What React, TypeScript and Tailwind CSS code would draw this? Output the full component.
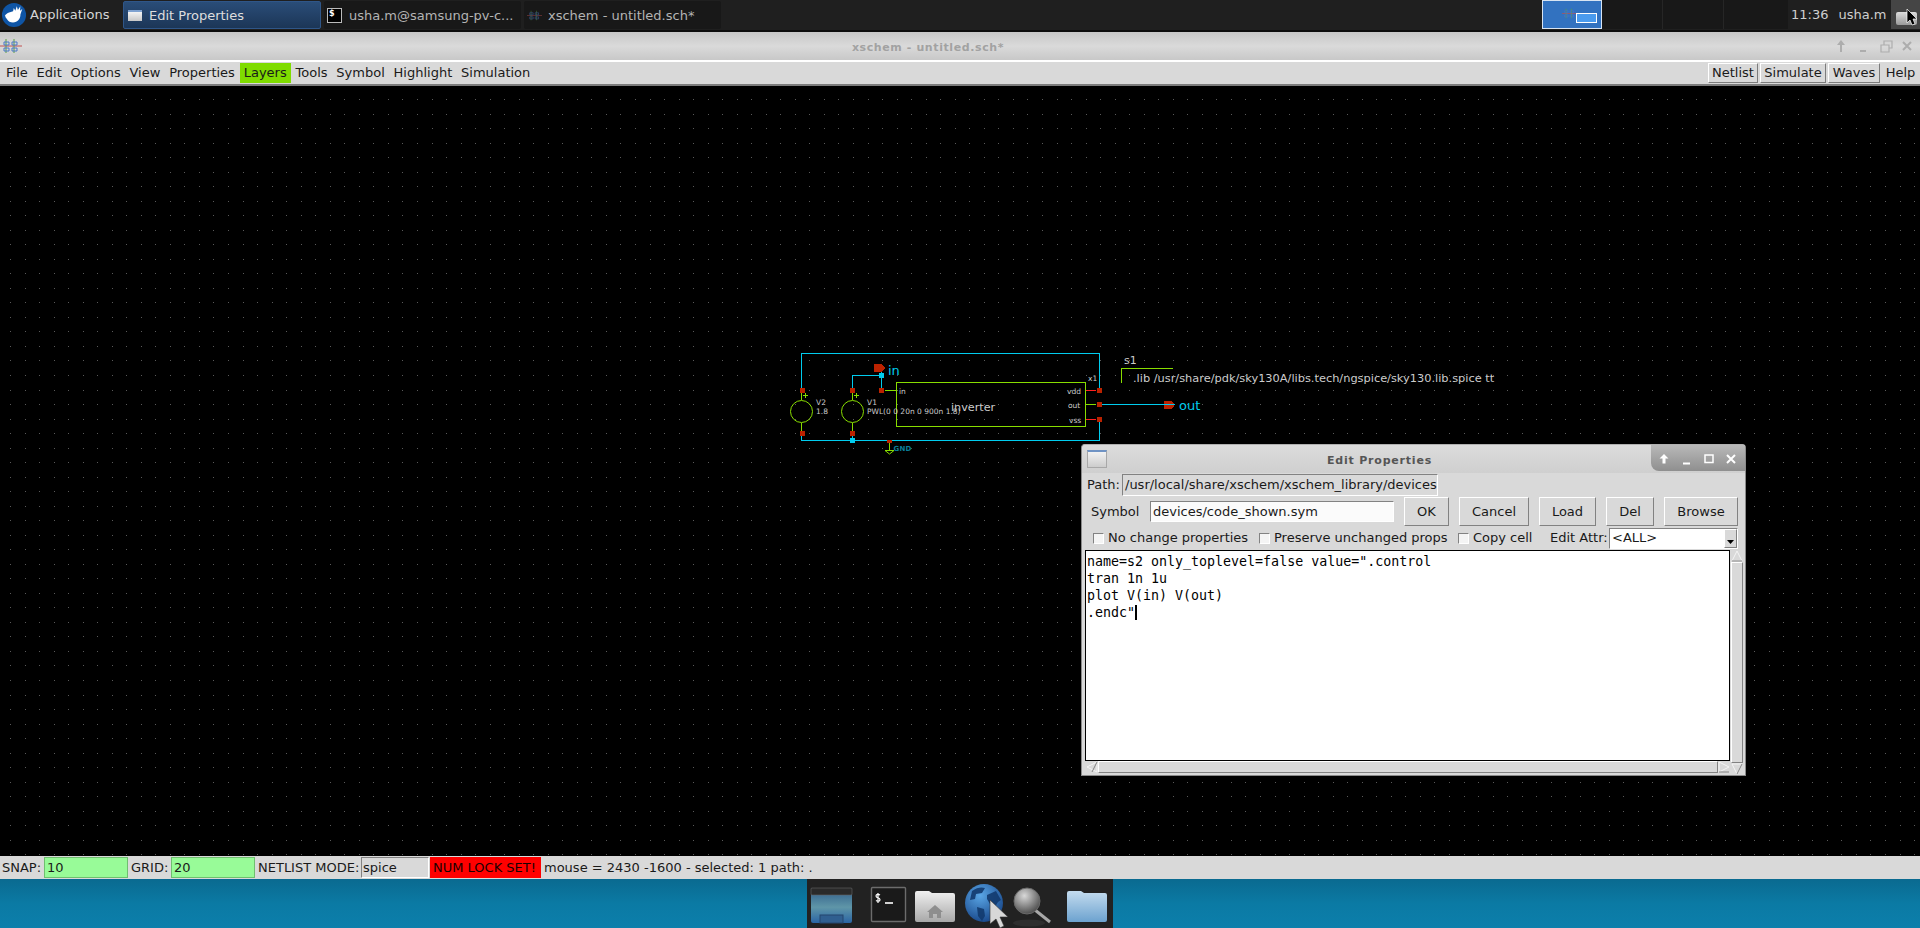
import { useMemo } from "react";

const WIRE = "#00ccee";
const GREEN = "#88dd00";
const PIN = "#bb2200";
const TEXT = "#cccccc";

function SchematicIcon({ className = "" }: { className?: string }) {
  return (
    <svg viewBox="0 0 22 16" className={className}>
      <path d="M0 8h22" stroke="#c05050" strokeWidth="1" />
      <path d="M6 1v14M14 1v14" stroke="#5aa040" strokeWidth="1" />
      <path d="M4 4h5v3H4zM12 4h5v3h-5zM4 10h5v3H4zM12 10h5v3h-5z" fill="none" stroke="#4a78c8" strokeWidth="1" />
    </svg>
  );
}

function Logo() {
  return (
    <svg viewBox="0 0 28 28" className="w-[26px] h-[26px] shrink-0">
      <circle cx="14" cy="14" r="13" fill="#0f55a5" />
      <path
        d="M4 14.5c1.5-1.5 4-3.5 6.5-3.8l2.5-.7.8-3.5 1.6 3 1.6-5 1.2 4.2 2.6-4.2-.3 5 2.4-2-2 6c.2 4.5-3 8.5-8 8.5-3 0-5-1.3-6.2-3.2-1-1.2-2.2-2.6-2.2-4.3z"
        fill="#ffffff"
      />
    </svg>
  );
}

function TaskButton({ active, icon, label }: { active?: boolean; icon: React.ReactNode; label: string }) {
  return (
    <div
      className={
        active
          ? "h-[28px] w-[198px] flex items-center rounded-[2px] border border-[#2f5688] bg-gradient-to-b from-[#2a4d78] to-[#1c3657] text-[#dedede]"
          : "h-[28px] w-[197px] flex items-center rounded-[2px] bg-[#181818] text-[#b4b4b4]"
      }
    >
      {icon}
      <span className="text-[13px] leading-none whitespace-nowrap">{label}</span>
    </div>
  );
}

function TopBar() {
  return (
    <div className="h-[32px] shrink-0 flex items-start bg-[#1f1f1f] border-b-2 border-[#0c0c0c]">
      <div className="w-[123px] h-[29px] flex items-center pl-[1px] gap-[3px] text-[#d6d6d6] text-[13px]">
        <Logo />
        <span>Applications</span>
      </div>
      <div className="flex gap-[3px] pt-[1px]">
        <TaskButton
          active
          label="Edit Properties"
          icon={
            <span className="ml-[4px] mr-[7px] w-[14px] h-[11px] bg-gradient-to-b from-[#f4f4f4] to-[#c8c8c8] border-t-2 border-[#7fa2d0]" />
          }
        />
        <TaskButton
          label="usha.m@samsung-pv-c..."
          icon={
            <span className="ml-[3px] mr-[7px] w-[15px] h-[15px] bg-black border border-[#bbbbbb] text-white text-[8px] leading-[10px] font-bold pl-[1px]">
              $
            </span>
          }
        />
        <TaskButton label="xschem - untitled.sch*" icon={<SchematicIcon className="ml-[3px] mr-[6px] w-[15px] h-[15px] opacity-60" />} />
      </div>
      <div className="ml-[821px] h-[29px] w-[60px] relative bg-[#3272c0] border border-[#d8e4f2]">
        <SchematicIcon className="absolute left-[19px] top-[6px] w-[15px] h-[13px]" />
        <div className="absolute left-[33px] top-[12px] w-[21px] h-[10px] bg-[#4a9bee] border border-white" />
      </div>
      <div className="h-[29px] w-[61px] bg-[#181818] border-r border-[#262626]" />
      <div className="h-[29px] w-[61px] bg-[#181818] border-r border-[#262626]" />
      <div className="h-[29px] w-[64px] bg-[#181818]" />
      <div className="h-[29px] w-[103px] flex items-center text-[13px] text-[#cfcfcf]">
        <span className="ml-[3px]">11:36</span>
        <span className="ml-[10px]">usha.m</span>
      </div>
      <div className="h-[29px] flex-1 relative bg-[#454545]">
        <div className="absolute left-[5px] top-[12px] w-[21px] h-[13px] rounded-[2px] bg-gradient-to-b from-[#dddddd] to-[#9a9a9a]" />
        <svg viewBox="0 0 12 18" className="absolute left-[15px] top-[8px] w-[12px] h-[18px]">
          <path d="M1 1v14l3-3 2 5 3-1-2-5h4z" fill="#000" stroke="#fff" strokeWidth="0.7" />
        </svg>
      </div>
    </div>
  );
}

function TitleBar() {
  return (
    <div className="h-[28px] shrink-0 relative flex items-center justify-center pr-[64px] pt-[4px] bg-gradient-to-b from-[#c6c6c6] via-[#dadada] to-[#c8c8c8]">
      <SchematicIcon className="absolute left-0 top-[6px] w-[22px] h-[16px]" />
      <span className="text-[11px] font-bold text-[#a2a2a2] tracking-[0.6px]">xschem - untitled.sch*</span>
      <svg viewBox="0 0 90 14" className="absolute right-[6px] top-[7px] w-[90px] h-[14px]" fill="none" stroke="#adadad" strokeWidth="2">
        <path d="M17 13V5" />
        <path d="M17 1l4 5h-8z" fill="#adadad" stroke="none" />
        <path d="M36 12h6" />
        <path d="M57 6h8v7h-8zM60 6V2h8v7h-3" strokeWidth="1.2" />
        <path d="M79 3l8 8M87 3l-8 8" />
      </svg>
    </div>
  );
}

function MenuBar() {
  const items = ["File", "Edit", "Options", "View", "Properties", "Layers", "Tools", "Symbol", "Highlight", "Simulation"];
  const tools = [
    { label: "Netlist", width: "w-[50px]" },
    { label: "Simulate", width: "w-[66px]" },
    { label: "Waves", width: "w-[52px]" },
  ];
  return (
    <div className="h-[26px] shrink-0 flex items-center gap-[0.8px] bg-[#d9d9d9] border-t-2 border-white border-b-2 border-b-[#7c7c7c] text-[13px] text-[#1a1a1a] pl-[2px]">
      {items.map((item) => (
        <div key={item} className={item === "Layers" ? "h-[20px] px-[4px] flex items-center bg-[#7fdc00]" : "h-[20px] px-[4px] flex items-center"}>
          {item}
        </div>
      ))}
      <div className="ml-auto flex items-center gap-[2px]">
        {tools.map((b) => (
          <div key={b.label} className={`${b.width} h-[20px] flex items-center justify-center border border-t-white border-l-white border-r-[#7c7c7c] border-b-[#7c7c7c]`}>
            {b.label}
          </div>
        ))}
        <div className="w-[37px] h-[20px] mr-[1px] flex items-center justify-center">Help</div>
      </div>
    </div>
  );
}

function Schematic() {
  const dots = useMemo(() => {
    let d = "";
    for (let r = 0; r < 53; r++) {
      for (let c = 0; c < 132; c++) {
        d += `M${Math.round(10 + c * 14.535)} ${Math.round(99 + r * 14.525)}h1v1h-1z`;
      }
    }
    return d;
  }, []);

  const pins: [number, number][] = [
    [802, 390],
    [802, 433],
    [852, 390],
    [852, 433],
    [881, 390],
    [1099, 390],
    [1099, 404],
    [1099, 419],
  ];

  return (
    <svg className="absolute inset-0 w-full h-full" viewBox="0 86 1920 770" shapeRendering="crispEdges">
      <path d={dots} fill="#5a5a5a" />
      {/* wires */}
      <path
        d="M801.5 390V353.5H1099.5V390M801.5 433V440.5H1099.5V419M852.5 433V440.5M852.5 390V375.5H881.5V390M881.5 366V375M1099 404.5H1170"
        fill="none"
        stroke={WIRE}
      />
      {/* sources */}
      <g fill="none" stroke={GREEN} shapeRendering="geometricPrecision">
        <circle cx="801.5" cy="411.5" r="11" />
        <circle cx="852.5" cy="411.5" r="11" />
        <path d="M885 450.5H894L889.5 454Z" />
      </g>
      <path
        d="M801.5 390V400M801.5 423V433M852.5 390V400M852.5 423V433M803 395.5H808M805.5 393V398M854 395.5H859M856.5 393V398M885 390.5H896M896.5 382.5H1085.5V426.5H896.5ZM1086 404.5H1096M889.5 442V450M1121.5 383V368.5H1173"
        fill="none"
        stroke={GREEN}
      />
      <path d="M1086 390.5H1096M1086 419.5H1096" stroke="#ff2020" />
      {pins.map(([x, y]) => (
        <rect key={`${x}-${y}`} x={x - 2} y={y - 2} width="5" height="5" fill={PIN} />
      ))}
      <rect x="887" y="440" width="5" height="3" fill={PIN} />
      <rect x="879" y="373" width="5" height="5" fill={WIRE} />
      <rect x="850" y="438" width="5" height="5" fill={WIRE} />
      <path d="M874 364h8l3 4-3 4h-8z" fill={PIN} />
      <path d="M1164 401h8l3 3.5-3 4h-8z" fill={PIN} />
      <path d="M1164 404.5H1175" stroke={WIRE} />
      <g fontFamily="'DejaVu Sans', sans-serif" shapeRendering="geometricPrecision">
        <text x="888" y="374.5" fontSize="13" fill={WIRE}>in</text>
        <text x="1179" y="410" fontSize="13" fill={WIRE}>out</text>
        <text x="893.5" y="451" fontSize="7" fontWeight="bold" fill="#0a7f9a" letterSpacing="0.2">GND</text>
        <text x="816" y="405" fontSize="7.5" fill={TEXT}>V2</text>
        <text x="816" y="414" fontSize="7.5" fill={TEXT}>1.8</text>
        <text x="867" y="405" fontSize="7.5" fill={TEXT}>V1</text>
        <text x="867" y="414" fontSize="7.5" fill={TEXT}>PWL(0 0 20n 0 900n 1.8)</text>
        <text x="899" y="393.5" fontSize="7.5" fill={TEXT}>in</text>
        <text x="951" y="410.5" fontSize="11.2" fill={TEXT}>inverter</text>
        <text x="1088" y="381" fontSize="7.5" fill={TEXT}>x1</text>
        <text x="1067" y="393.5" fontSize="7.5" fill={TEXT}>vdd</text>
        <text x="1068" y="408" fontSize="7.5" fill={TEXT}>out</text>
        <text x="1069" y="423" fontSize="7.5" fill={TEXT}>vss</text>
        <text x="1124" y="364" fontSize="11" fill={TEXT}>s1</text>
        <text x="1133" y="381.5" fontSize="11.37" fill={TEXT}>.lib /usr/share/pdk/sky130A/libs.tech/ngspice/sky130.lib.spice tt</text>
      </g>
    </svg>
  );
}

function Button({ label, width }: { label: string; width: string }) {
  return (
    <div className={`${width} h-[29px] flex items-center justify-center border border-t-white border-l-white border-r-[#828282] border-b-[#828282]`}>
      {label}
    </div>
  );
}

function Check({ label, width }: { label: string; width: string }) {
  return (
    <div className={`${width} flex items-center`}>
      <span className="w-[11px] h-[11px] mr-[4px] bg-[#f4f4f4] border border-t-[#828282] border-l-[#828282] border-r-white border-b-white" />
      <span>{label}</span>
    </div>
  );
}

function Arrow({ dir }: { dir: "up" | "down" | "left" | "right" }) {
  const d = {
    up: "M6 1L11 11H1Z",
    down: "M1 1H11L6 11Z",
    left: "M1 6L11 1V11Z",
    right: "M1 1L11 6L1 11Z",
  }[dir];
  return (
    <svg viewBox="0 0 12 12" className="w-[12px] h-[12px] shrink-0 block" fill="none">
      <path d={d} stroke="#f4f4f4" />
      <path d={dir === "up" || dir === "right" ? "M11 11H1" : "M11 1L6 11"} stroke="#828282" />
    </svg>
  );
}

function EditProperties() {
  return (
    <div className="absolute left-[1081px] top-[444px] w-[665px] h-[332px] flex flex-col rounded-t-[4px] bg-[#d9d9d9] border border-[#8a8a8a] border-t-[#b0b0b0] text-[13px] text-[#1a1a1a]">
      <div className="h-[28px] shrink-0 relative flex items-center justify-center pr-[68px] pt-[4px] rounded-t-[4px] bg-gradient-to-b from-[#dcdcdc] to-[#cfcfcf]">
        <div className="absolute left-[5px] top-[5px] w-[20px] h-[18px] bg-gradient-to-b from-[#f2f2f2] to-[#cccccc] border border-[#a8a8a8] border-t-2 border-t-[#6f93c4]" />
        <span className="text-[11px] font-bold text-[#555555] tracking-[0.8px]">Edit Properties</span>
        <div className="absolute right-0 top-0 w-[94px] h-[26px] rounded-bl-[8px] bg-gradient-to-b from-[#b9b9b9] to-[#8f8f8f]">
          <svg viewBox="0 0 94 26" className="w-full h-full" fill="#ffffff" stroke="#ffffff">
            <path d="M13 9l4.5 4.5h-3v5h-3v-5h-3z" stroke="none" />
            <path d="M32 18.5h7" strokeWidth="2" />
            <path d="M54 10h8v7.5h-8z" fill="none" strokeWidth="1.5" />
            <path d="M76 10l8 8M84 10l-8 8" strokeWidth="2" />
          </svg>
        </div>
      </div>

      <div className="h-[24px] shrink-0 flex items-center pl-[5px]">
        <span className="w-[35px]">Path:</span>
        <div className="w-[316px] h-[22px] flex items-center pl-[2px] overflow-hidden whitespace-nowrap border border-t-[#828282] border-l-[#828282] border-r-white border-b-white">
          /usr/local/share/xschem/xschem_library/devices
        </div>
      </div>

      <div className="h-[29px] shrink-0 flex items-center pl-[9px] gap-[10px]">
        <span className="w-[49px]">Symbol</span>
        <div className="w-[244px] h-[21px] flex items-center pl-[2px] bg-[#fbfbfb] border border-t-[#828282] border-l-[#828282] border-r-white border-b-white">
          devices/code_shown.sym
        </div>
        <Button label="OK" width="w-[45px]" />
        <Button label="Cancel" width="w-[70px]" />
        <Button label="Load" width="w-[57px]" />
        <Button label="Del" width="w-[48px]" />
        <Button label="Browse" width="w-[74px]" />
      </div>

      <div className="h-[24px] shrink-0 flex items-center pl-[11px]">
        <Check label="No change properties" width="w-[166px]" />
        <Check label="Preserve unchanged props" width="w-[199px]" />
        <Check label="Copy cell" width="w-[92px]" />
        <span className="w-[59px]">Edit Attr:</span>
        <div className="w-[129px] h-[21px] flex items-center pl-[2px] bg-white border border-t-[#828282] border-l-[#828282] border-r-white border-b-white relative">
          &lt;ALL&gt;
          <div className="absolute right-0 top-0 bottom-0 w-[13px] bg-[#d9d9d9] border border-t-white border-l-white border-r-[#828282] border-b-[#828282] flex items-end justify-center pb-[3px]">
            <svg viewBox="0 0 7 4" className="w-[7px] h-[4px]">
              <path d="M0 0h7L3.5 4z" fill="#000" />
            </svg>
          </div>
        </div>
      </div>

      <div className="flex-1 min-h-0 flex pl-[3px] pr-[2px]">
        <div className="flex-1 flex flex-col min-w-0">
          <div className="h-[211px] border border-black bg-white pl-[1px] pt-[2px] font-['DejaVu_Sans_Mono',monospace] text-[13.3px] leading-[17px] text-black whitespace-pre">
            <div>name=s2 only_toplevel=false value=".control</div>
            <div>tran 1n 1u</div>
            <div>plot V(in) V(out)</div>
            <div className="flex items-center">
              .endc"
              <span className="w-[2px] h-[15px] bg-black" />
            </div>
          </div>
          <div className="h-[12px] flex pl-[1px]">
            <Arrow dir="left" />
            <div className="flex-1 border border-t-white border-l-white border-r-[#828282] border-b-[#828282]" />
            <Arrow dir="right" />
          </div>
        </div>
        <div className="w-[12px] ml-[1px] flex flex-col">
          <Arrow dir="up" />
          <div className="flex-1 border border-t-white border-l-white border-r-[#828282] border-b-[#828282]" />
          <Arrow dir="down" />
        </div>
      </div>
    </div>
  );
}

function Entry({ value, width }: { value: string; width: string }) {
  return (
    <div className={`${width} h-[21px] flex items-center pl-[2px] bg-[#98fb98] border border-[#6fbf6f]`}>{value}</div>
  );
}

function StatusBar() {
  return (
    <div className="h-[23px] shrink-0 flex items-center bg-[#d9d9d9] text-[13px] text-[#1a1a1a] pl-[2px] whitespace-nowrap">
      <span className="w-[42px]">SNAP:</span>
      <Entry value="10" width="w-[84px]" />
      <span className="w-[40px] ml-[3px]">GRID:</span>
      <Entry value="20" width="w-[84px]" />
      <span className="w-[103px] ml-[3px]">NETLIST MODE:</span>
      <div className="w-[68px] h-[21px] flex items-center pl-[1px] border border-t-[#828282] border-l-[#828282] border-r-white border-b-white">
        spice
      </div>
      <div className="w-[111px] h-[21px] ml-[1px] flex items-center pl-[3px] bg-[#ff0000] text-[#1a0000]">NUM LOCK SET!</div>
      <span className="ml-[3px]">mouse = 2430 -1600 - selected: 1 path: .</span>
    </div>
  );
}

function Dock() {
  return (
    <div className="h-[49px] shrink-0 bg-gradient-to-b from-[#0a6a90] via-[#0b7aa4] to-[#0c7fab] flex justify-center">
      <div className="w-[306px] h-full bg-[#222222] flex items-start">
        <svg viewBox="0 0 306 49" className="w-[306px] h-[49px]">
          <defs>
            <linearGradient id="win" x1="0" y1="0" x2="0" y2="1">
              <stop offset="0" stopColor="#2d5a88" />
              <stop offset="0.55" stopColor="#5f96a8" />
              <stop offset="1" stopColor="#2a64a4" />
            </linearGradient>
            <linearGradient id="home" x1="0" y1="0" x2="0" y2="1">
              <stop offset="0" stopColor="#f0f0f0" />
              <stop offset="1" stopColor="#a8a8a8" />
            </linearGradient>
            <linearGradient id="folder" x1="0" y1="0" x2="0" y2="1">
              <stop offset="0" stopColor="#c4dcef" />
              <stop offset="1" stopColor="#6ca2cf" />
            </linearGradient>
            <radialGradient id="globe" cx="0.4" cy="0.3" r="0.8">
              <stop offset="0" stopColor="#5aa6e6" />
              <stop offset="1" stopColor="#123f82" />
            </radialGradient>
            <radialGradient id="lens" cx="0.4" cy="0.3" r="0.8">
              <stop offset="0" stopColor="#d8d8d8" />
              <stop offset="1" stopColor="#3c3c3c" />
            </radialGradient>
          </defs>
          {/* window manager */}
          <rect x="4" y="9" width="41" height="35" rx="2" fill="url(#win)" />
          <rect x="4" y="9" width="41" height="7" rx="1" fill="#2a2a2a" stroke="#666" strokeWidth="0.6" />
          <rect x="13" y="36" width="23" height="8" fill="#305f90" stroke="#24476e" />
          {/* terminal */}
          <rect x="64.5" y="8.5" width="34" height="34" rx="1" fill="#1a1a1a" stroke="#6c6c6c" strokeWidth="1.4" />
          <path d="M78 24h8" stroke="#fff" strokeWidth="1.6" />
          <path d="M73 16c-1.6-1.2-4-.8-4 .9 0 2.4 4 1.4 4 3.8 0 1.7-2.4 2.1-4 .9M71 14v10" fill="none" stroke="#fff" strokeWidth="1.2" />
          {/* home folder */}
          <path d="M108 14a2 2 0 0 1 2-2h12l3 2h21a2 2 0 0 1 2 2v25a2 2 0 0 1-2 2H110a2 2 0 0 1-2-2z" fill="url(#home)" />
          <path d="M128 26l8 7h-2v6h-4v-4h-4v4h-4v-6h-2z" fill="#8e8e8e" />
          {/* globe */}
          <circle cx="177" cy="24" r="19" fill="url(#globe)" />
          <path d="M165 12c5-4 10-4 13-3l-3 5-6 1-1 5-5 1zM180 16l9-4 5 9-3 2-3 5-5-3-3-5zM170 28l7 2 1 7-3 5-4-5z" fill="#123a6e" opacity="0.9" />
          {/* pointer */}
          <path d="M183 21v24l6-5 4 9 4-2-4-9h8z" fill="#d8d8d8" stroke="#333" strokeWidth="0.6" />
          {/* magnifier */}
          <ellipse cx="222" cy="44" rx="16" ry="3.5" fill="#2e2e2e" />
          <path d="M228 31l15 12" stroke="#a8a8a8" strokeWidth="3" />
          <circle cx="220" cy="22" r="13" fill="url(#lens)" stroke="#6a6a6a" strokeWidth="1" />
          {/* folder */}
          <path d="M260 14a2 2 0 0 1 2-2h12l3 2h21a2 2 0 0 1 2 2v25a2 2 0 0 1-2 2H262a2 2 0 0 1-2-2z" fill="url(#folder)" />
        </svg>
      </div>
    </div>
  );
}

export default function App() {
  return (
    <div className="relative w-full h-[928px] flex flex-col overflow-hidden font-['DejaVu_Sans',sans-serif]">
      <TopBar />
      <TitleBar />
      <MenuBar />
      <div className="relative flex-1 min-h-0 bg-black">
        <Schematic />
      </div>
      <StatusBar />
      <Dock />
      <EditProperties />
    </div>
  );
}
